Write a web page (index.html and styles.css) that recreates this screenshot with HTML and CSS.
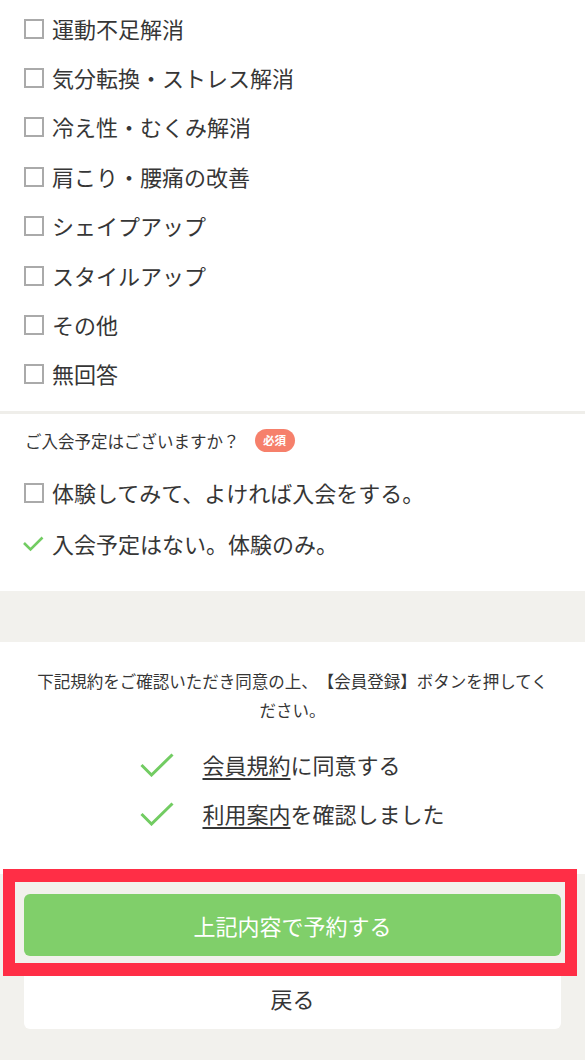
FILE: index.html
```html
<!DOCTYPE html>
<html lang="ja">
<head>
  <meta charset="UTF-8">
  <title>予約内容の確認</title>
  <link rel="stylesheet" href="styles.css">
</head>
<body>

<div class="section purpose">
  <ul class="opts">
    <li><span class="box"></span>運動不足解消</li>
    <li><span class="box"></span>気分転換・ストレス解消</li>
    <li><span class="box"></span>冷え性・むくみ解消</li>
    <li><span class="box"></span>肩こり・腰痛の改善</li>
    <li><span class="box"></span>シェイプアップ</li>
    <li><span class="box"></span>スタイルアップ</li>
    <li><span class="box"></span>その他</li>
    <li><span class="box"></span>無回答</li>
  </ul>
</div>

<div class="section plan">
  <div class="question">ご入会予定はございますか？<span class="req">必須</span></div>
  <ul class="opts wide">
    <li><span class="box"></span>体験してみて、よければ入会をする。</li>
    <li>
      <svg class="tick" width="22" height="16" viewBox="0 0 22 16"><path d="M2 7 L8.5 13.5 L20.5 1.5" fill="none" stroke="#72cc62" stroke-width="2.6"/></svg>
      入会予定はない。体験のみ。
    </li>
  </ul>
</div>

<div class="band"></div>

<div class="section terms">
  <p class="note">下記規約をご確認いただき同意の上、【会員登録】ボタンを押してください。</p>
  <div class="agree">
    <div class="agree-list">
      <div class="agree-row">
        <svg class="big-tick" width="34" height="24" viewBox="0 0 34 24"><path d="M1.5 12 L11.5 22 L32.5 1.5" fill="none" stroke="#72cc62" stroke-width="3"/></svg>
        <span><a href="#">会員規約</a>に同意する</span>
      </div>
      <div class="agree-row">
        <svg class="big-tick" width="34" height="24" viewBox="0 0 34 24"><path d="M1.5 12 L11.5 22 L32.5 1.5" fill="none" stroke="#72cc62" stroke-width="3"/></svg>
        <span><a href="#">利用案内</a>を確認しました</span>
      </div>
    </div>
  </div>
</div>

<div class="actions">
  <button class="btn-submit">上記内容で予約する</button>
  <button class="btn-back">戻る</button>
</div>

<div class="highlight"></div>

</body>
</html>
```

FILE: styles.css
```css
body {
  margin: 0;
  background-color: #f2f1ed;
  color: #363636;
  font-family: "Noto Sans CJK JP", "Noto Sans", sans-serif;
  text-spacing-trim: space-all;
  position: relative;
  min-height: 1060px;
}
.section {
  background-color: #fff;
}
.opts {
  list-style: none;
  margin: 0;
  padding: 0 0 0 24px;
}
.opts li {
  display: flex;
  align-items: center;
  height: 49.4px;
  font-size: 22px;
}
.box {
  box-sizing: border-box;
  width: 20px;
  height: 20px;
  border: 2.5px solid #aaaaaa;
  margin-right: 8px;
  margin-top: 2px;
  flex-shrink: 0;
}
.purpose {
  padding: 3px 0 13px;
  border-bottom: 3px solid #efeeea;
}
.plan {
  padding: 15px 0 23px;
}
.question {
  display: flex;
  align-items: center;
  height: 23px;
  padding-left: 25px;
  font-size: 16.5px;
  margin-bottom: 14px;
}
.req {
  margin-left: 15px;
  width: 40px;
  height: 23px;
  line-height: 23px;
  border-radius: 12px;
  background-color: #f6806b;
  color: #fff;
  font-size: 11.5px;
  font-weight: bold;
  text-align: center;
}
.opts.wide li {
  height: 51px;
}
.tick {
  margin-left: -2px;
  margin-right: 8px;
  margin-top: 2px;
  flex-shrink: 0;
}
.band {
  height: 51px;
}
.terms {
  padding: 25px 30px 37px;
}
.note {
  margin: 0;
  text-align: center;
  font-size: 16.5px;
  line-height: 29px;
}
.agree {
  display: flex;
  justify-content: center;
  margin-top: 14px;
}
.agree-row {
  display: flex;
  align-items: center;
  height: 49px;
  font-size: 22px;
  white-space: nowrap;
}
.big-tick {
  margin-right: 28px;
  margin-top: 2px;
  flex-shrink: 0;
}
.agree-row a {
  color: #363636;
  text-decoration: underline;
  text-underline-offset: 4px;
  text-decoration-thickness: 1.5px;
}
.actions {
  padding: 20px 24px;
  display: flex;
  flex-direction: column;
  gap: 10px;
}
.actions button {
  font-family: inherit;
  font-size: 22px;
  border: none;
  border-radius: 6px;
  cursor: pointer;
}
.btn-submit {
  height: 62px;
  background-color: #80cf6a;
  color: #fff;
}
.btn-back {
  height: 63px;
  background-color: #fff;
  color: #363636;
}
.highlight {
  position: absolute;
  left: 3px;
  top: 869px;
  width: 574px;
  height: 107px;
  box-sizing: border-box;
  border: 12px solid #ff2e46;
  border-top-width: 13px;
  border-bottom-width: 13px;
  pointer-events: none;
}
```
